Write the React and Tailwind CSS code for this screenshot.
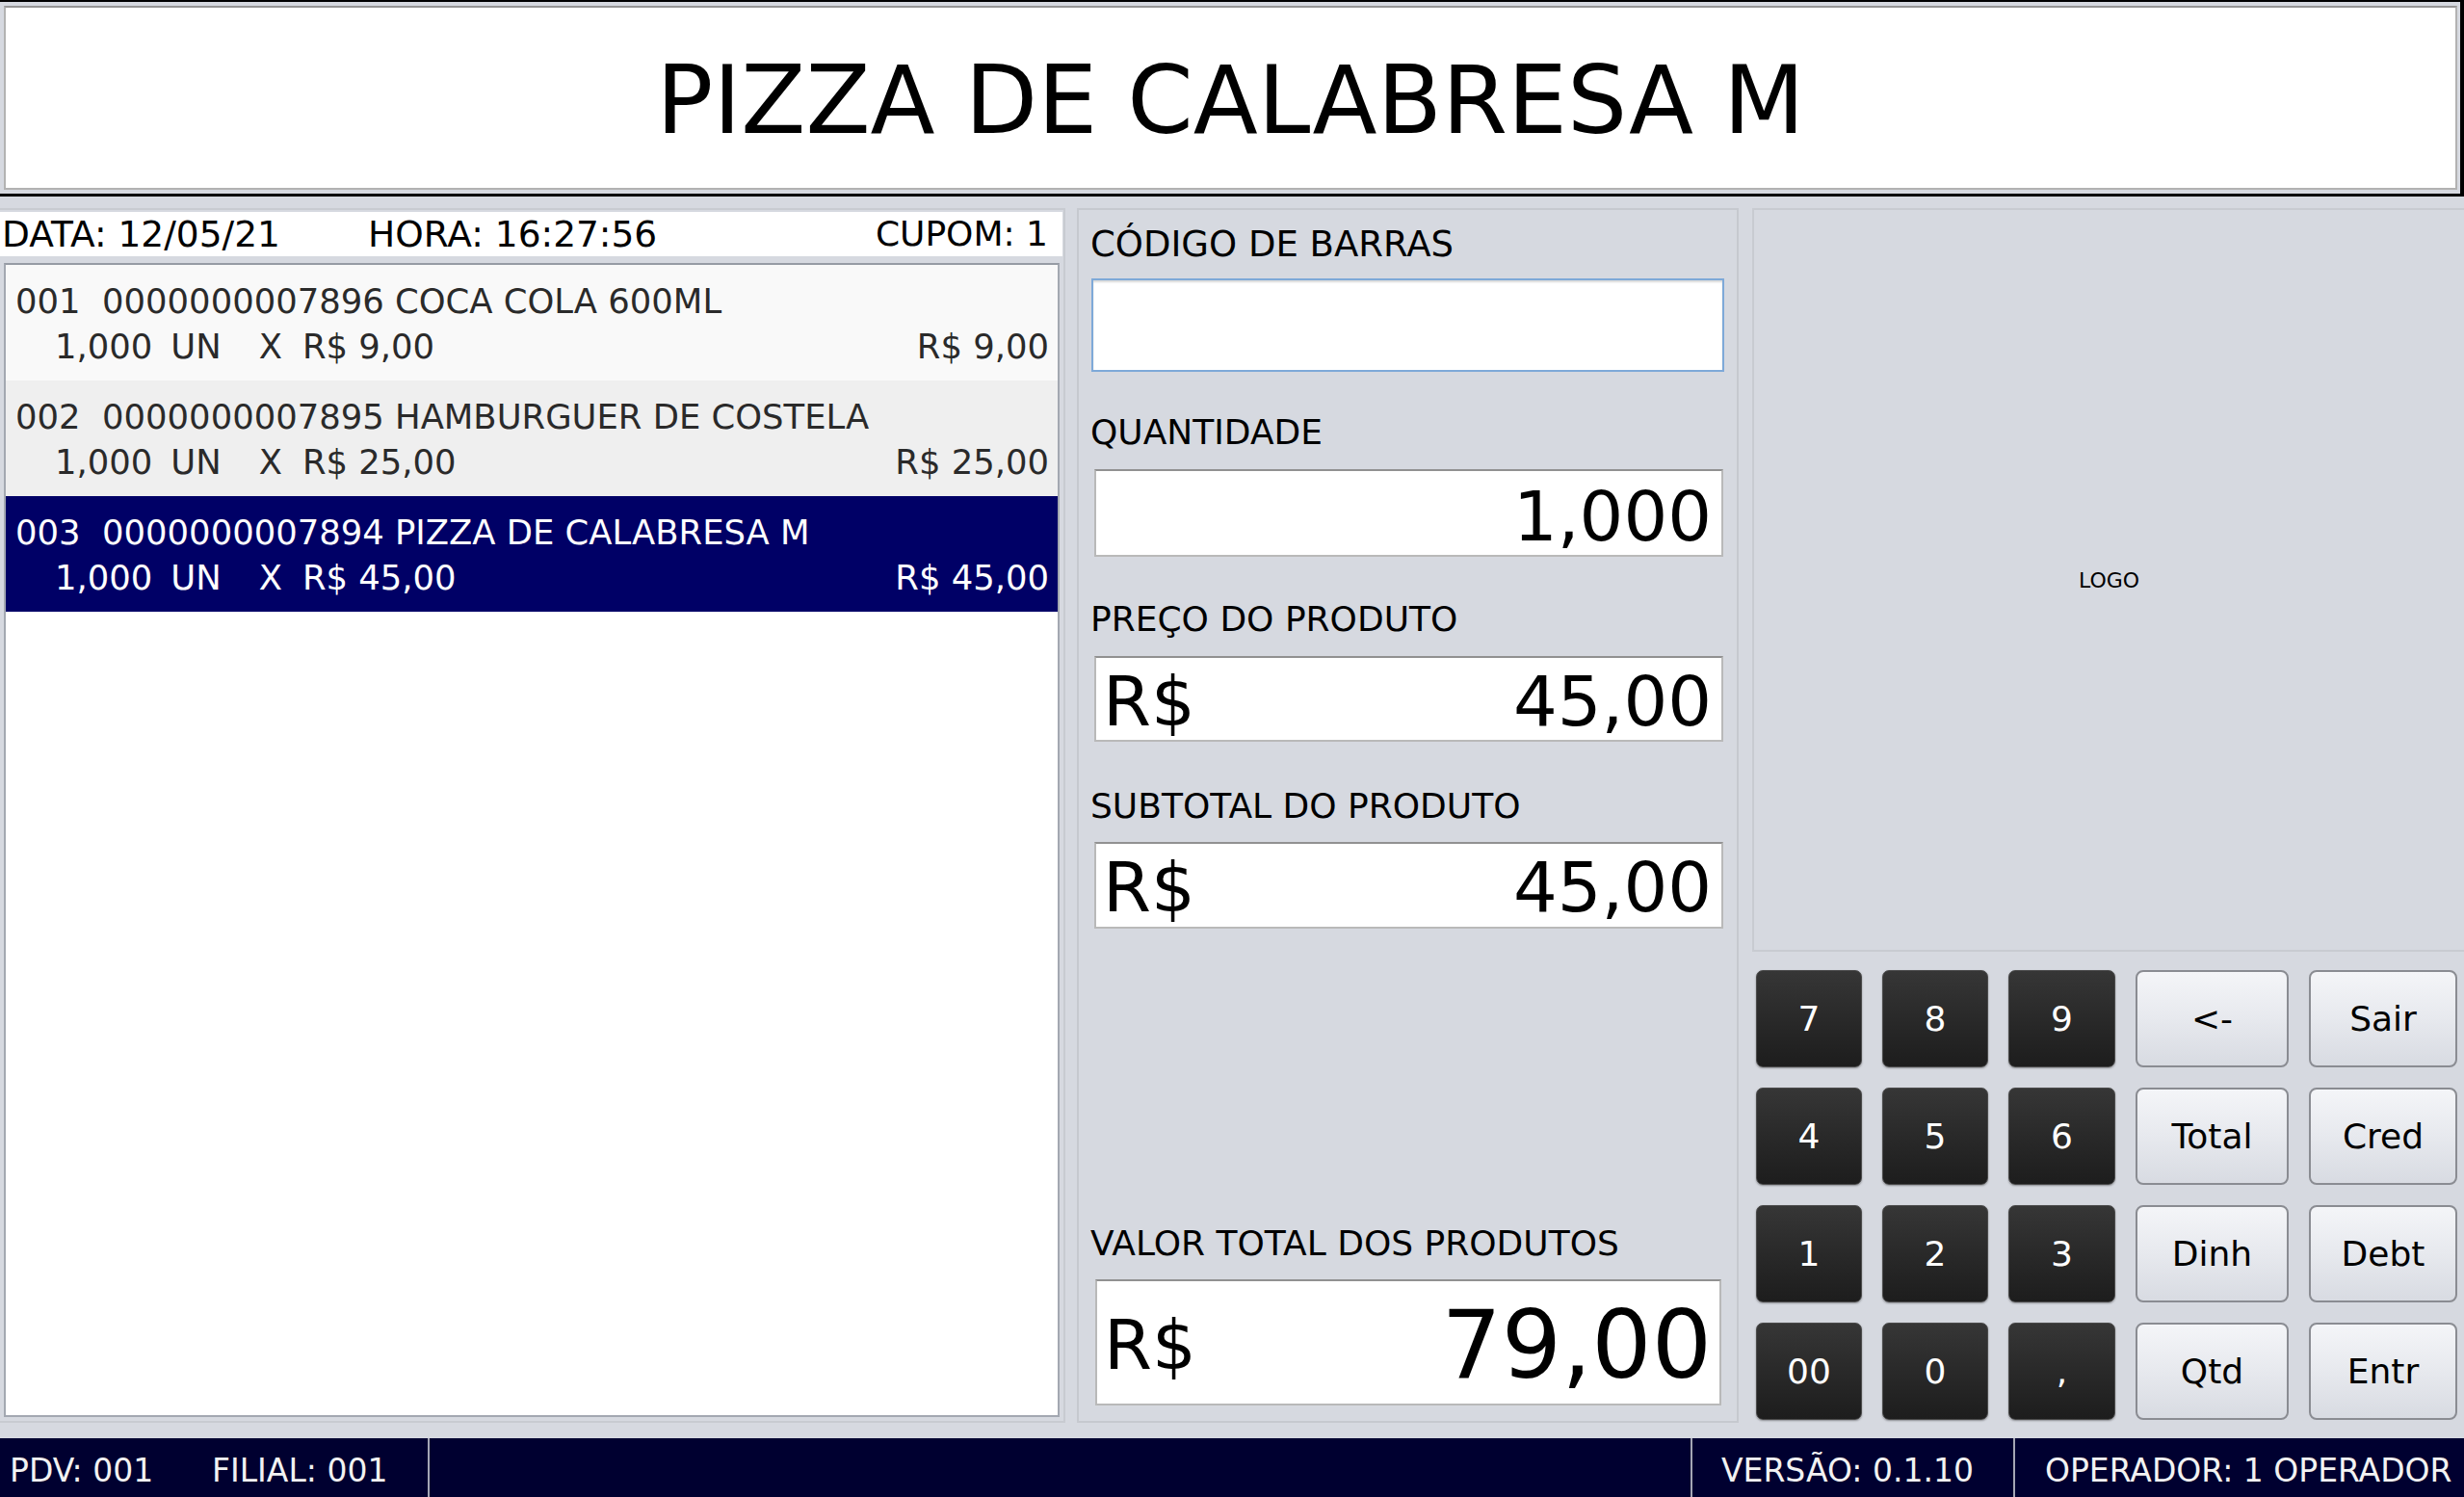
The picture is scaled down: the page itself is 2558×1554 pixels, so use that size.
import React from "react";

const items = [
  { n: "001", code: "0000000007896", name: "COCA COLA 600ML", qty: "1,000", un: "UN", unit: "R$ 9,00", total: "R$ 9,00", bg: "bg-[#f9f9f9] text-[#2a2a2a]" },
  { n: "002", code: "0000000007895", name: "HAMBURGUER DE COSTELA", qty: "1,000", un: "UN", unit: "R$ 25,00", total: "R$ 25,00", bg: "bg-[#efefef] text-[#2a2a2a]" },
  { n: "003", code: "0000000007894", name: "PIZZA DE CALABRESA M", qty: "1,000", un: "UN", unit: "R$ 45,00", total: "R$ 45,00", bg: "bg-[#000066] text-white" },
];

const keys = [
  { t: "7", d: true }, { t: "8", d: true }, { t: "9", d: true }, { t: "<-" }, { t: "Sair" },
  { t: "4", d: true }, { t: "5", d: true }, { t: "6", d: true }, { t: "Total" }, { t: "Cred" },
  { t: "1", d: true }, { t: "2", d: true }, { t: "3", d: true }, { t: "Dinh" }, { t: "Debt" },
  { t: "00", d: true }, { t: "0", d: true }, { t: ",", d: true }, { t: "Qtd" }, { t: "Entr" },
];

function Key({ t, d }) {
  if (d) {
    return (
      <div className="h-[101px] rounded-[7px] border border-[#4a4a4a] bg-gradient-to-b from-[#363636] to-[#1d1d1d] shadow-[0_1px_2px_rgba(0,0,0,0.35)] flex items-center justify-center text-[36px] text-white leading-none">
        {t}
      </div>
    );
  }
  return (
    <div className="h-[101px] rounded-[8px] border-2 border-[#8a8c92] bg-gradient-to-b from-[#f4f5f8] via-[#e7e9ee] to-[#d8dbe2] flex items-center justify-center text-[36px] text-black leading-none">
      {t}
    </div>
  );
}

function Label({ children, className = "" }) {
  return <div className={"h-[40px] leading-[40px] text-[36px] text-black whitespace-nowrap -ml-[2px] " + className}>{children}</div>;
}

function MoneyBox({ value, big, className = "" }) {
  return (
    <div className={"bg-white border-2 border-[#b9b9b9] border-t-[#919191] flex items-center justify-between pl-[7px] text-black leading-none " + className}>
      <span className="text-[72px] pt-[4px]">R$</span>
      <span className={(big ? "text-[98px] pr-[8px]" : "text-[72px] pr-[10px]") + " pt-[4px]"}>{value}</span>
    </div>
  );
}

export default function App() {
  return (
    <div className="w-[2558px] h-[1554px] flex flex-col bg-[#d6d9e0] overflow-hidden font-['DejaVu_Sans',sans-serif]">
      {/* Header */}
      <div className="h-[204px] shrink-0 border-t-2 border-b-[3px] border-r-4 border-black pt-[4px] pb-[4px] pl-[4px] pr-[3px] bg-[#d6d9e0]">
        <div className="h-[191px] bg-white border-2 border-[#b2b2b2] border-t-[#959595] flex items-center justify-center">
          <span className="text-[98px] leading-none text-black pt-[4px] whitespace-nowrap">PIZZA DE CALABRESA M</span>
        </div>
      </div>

      {/* Main */}
      <div className="flex-1 flex pt-[12px] pb-[16px]">
        {/* Left column */}
        <div className="w-[1106px] shrink-0 flex flex-col border-t-2 border-r-2 border-b-2 border-[#c8cbd1] pt-[2px]">
          <div className="h-[46px] bg-white mr-[1px] flex items-center text-black whitespace-nowrap pl-[2px] pr-[15px]">
            <span className="w-[380px] text-[37.5px]">DATA: 12/05/21</span>
            <span className="text-[37.5px]">HORA: 16:27:56</span>
            <span className="ml-auto text-[36px]">CUPOM: 1</span>
          </div>
          <div className="flex-1 mt-[7px] ml-[4px] mr-[4px] mb-[4px] bg-white border-2 border-[#a3a8b1] border-t-[#969ba4]">
            {items.map((it) => (
              <div key={it.n} className={"h-[120px] pt-[15px] pl-[10px] pr-[9px] text-[35.4px] " + it.bg}>
                <div className="h-[47px] leading-[46px] whitespace-pre">{it.n + "  " + it.code + " " + it.name}</div>
                <div className="h-[47px] leading-[46px] whitespace-pre flex">
                  <span className="ml-[41px]">{it.qty}</span>
                  <span className="ml-[19px]">{it.un}</span>
                  <span className="ml-[39px]">X</span>
                  <span className="ml-[21px]">{it.unit}</span>
                  <span className="ml-auto">{it.total}</span>
                </div>
              </div>
            ))}
          </div>
        </div>

        {/* Middle column */}
        <div className="w-[687px] shrink-0 ml-[12px] flex flex-col border-2 border-[#c6c9cf] px-[14px] pt-[16px] pb-[16px]">
          <Label className="text-[37px]">CÓDIGO DE BARRAS</Label>
          <div className="mt-[15px] h-[97px] -mx-[1px] bg-white border-2 border-[#7ea9d8] shadow-[inset_0_2px_2px_rgba(0,0,0,0.15)]"></div>

          <Label className="mt-[43px]">QUANTIDADE</Label>
          <div className="mt-[18px] h-[91px] ml-[2px] bg-white border-2 border-[#b9b9b9] border-t-[#919191] flex items-center justify-end pr-[10px] text-[72px] text-black leading-none">
            <span className="pt-[6px]">1,000</span>
          </div>

          <Label className="mt-[45px]">PREÇO DO PRODUTO</Label>
          <MoneyBox value="45,00" className="mt-[18px] h-[89px] ml-[2px]" />

          <Label className="mt-[47px]">SUBTOTAL DO PRODUTO</Label>
          <MoneyBox value="45,00" className="mt-[17px] h-[90px] ml-[2px]" />

          <div className="flex-1"></div>

          <Label className="text-[36.5px]">VALOR TOTAL DOS PRODUTOS</Label>
          <MoneyBox value="79,00" big className="mt-[17px] h-[131px] ml-[3px] mr-[2px]" />
        </div>

        {/* Right column */}
        <div className="flex-1 ml-[14px] flex flex-col">
          <div className="h-[772px] border-2 border-r-0 border-[#c8cbd1] flex items-center justify-center">
            <span className="text-[22px] text-black">LOGO</span>
          </div>
          <div className="mt-[19px] ml-[4px] grid grid-cols-[110px_110px_111px_159px_154px] gap-x-[21px] gap-y-[21px]">
            {keys.map((k, i) => (
              <Key key={i} t={k.t} d={k.d} />
            ))}
          </div>
        </div>
      </div>

      {/* Status bar */}
      <div className="h-[61px] shrink-0 bg-[#000030] flex items-stretch text-[33px] text-[#f2f2f2] whitespace-nowrap">
        <div className="w-[444px] flex items-center pl-[10px] pt-[6px]">
          <span className="w-[210px]">PDV: 001</span>
          <span>FILIAL: 001</span>
        </div>
        <div className="w-[2px] bg-[#a4a6b4]"></div>
        <div className="flex-1"></div>
        <div className="w-[2px] bg-[#a4a6b4]"></div>
        <div className="w-[333px] flex items-center pl-[30px] pt-[6px]">VERSÃO: 0.1.10</div>
        <div className="w-[2px] bg-[#a4a6b4]"></div>
        <div className="w-[466px] flex items-center pl-[31px] pt-[6px]">OPERADOR: 1 OPERADOR</div>
      </div>
    </div>
  );
}
